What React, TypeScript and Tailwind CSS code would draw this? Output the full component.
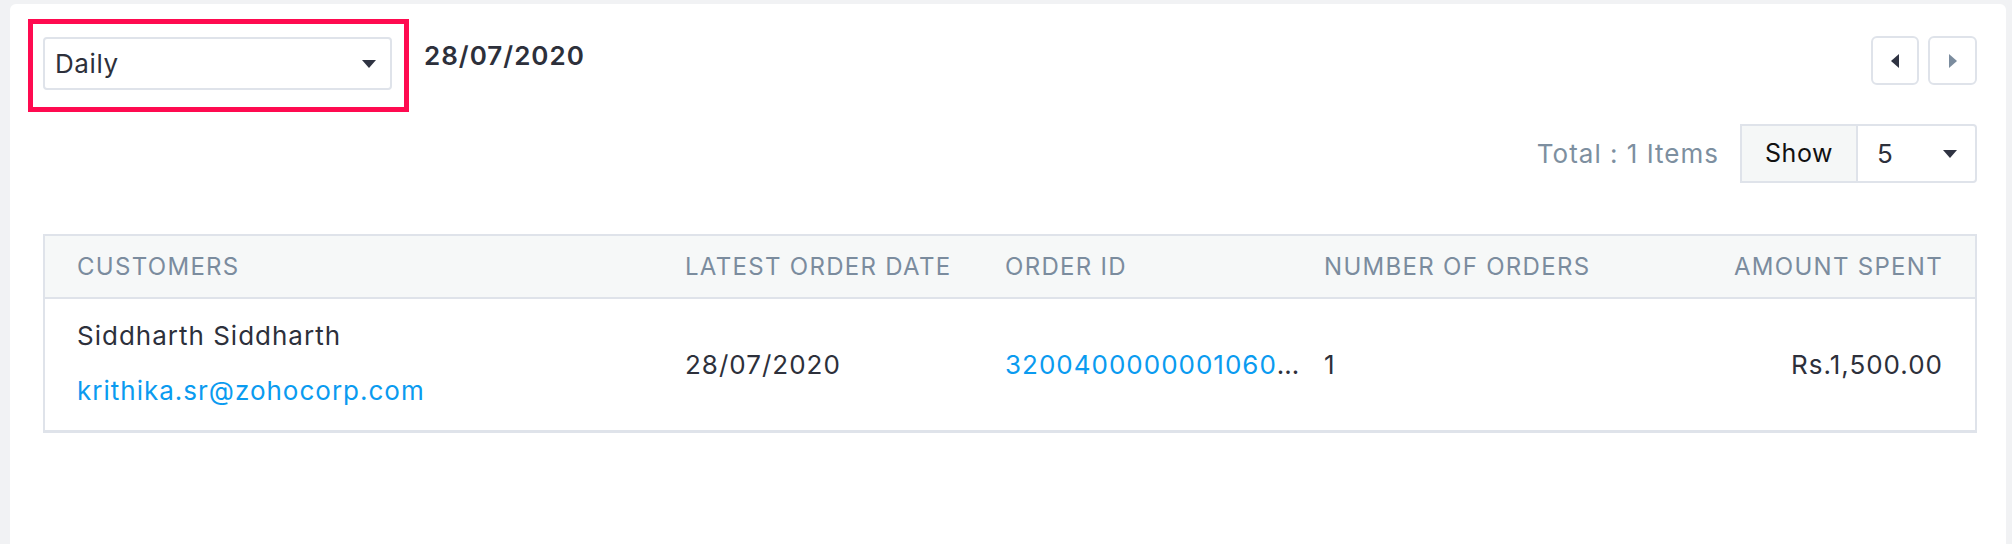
import React from 'react';

const font = { fontFamily: 'Inter, "Noto Sans", sans-serif' };

const Caret = ({ className = '' }: { className?: string }) => (
    <svg width="14" height="8" viewBox="0 0 14 8" className={className}>
        <path d="M0 0 L14 0 L7 8 Z" fill="#2f3342" />
    </svg>
);

const Arrow = ({ dir, color }: { dir: 'left' | 'right'; color: string }) => (
    <svg width="8" height="14" viewBox="0 0 8 14">
        {dir === 'left' ? <path d="M8 0 L8 14 L0 7 Z" fill={color} /> : <path d="M0 0 L0 14 L8 7 Z" fill={color} />}
    </svg>
);

const columns = ['CUSTOMERS', 'LATEST ORDER DATE', 'ORDER ID', 'NUMBER OF ORDERS', 'AMOUNT SPENT'];

const App = () => {
    return (
        <div className="w-[2012px] h-[544px] bg-[#f1f2f4] pt-[4px] pl-[10px] pr-[6px] overflow-hidden" style={font}>
            <div className="h-[560px] bg-white rounded-[6px] pl-[33px] pr-[29px] pt-[32px]">

                {/* Top bar */}
                <div className="flex items-start justify-between">
                    <div className="flex items-start mt-[1px]">
                        <div className="relative">
                            <div className="w-[349px] h-[53px] border-2 border-[#dfe3ea] rounded-[4px] flex items-center justify-between pl-[10px] pr-[14px]">
                                <span className="text-[26px] text-[#2d303b] tracking-[0.6px]">Daily</span>
                                <Caret />
                            </div>
                            {/* highlight annotation */}
                            <div className="absolute -left-[15px] -top-[18px] -right-[17px] -bottom-[22px] border-[5px] border-[#ff0a50]" />
                        </div>
                        <span className="ml-[32px] mt-[3px] text-[26px] leading-[32px] font-semibold text-[#2d303b] tracking-[1px]">28/07/2020</span>
                    </div>
                    <div className="flex gap-[9px]">
                        <button className="w-[48px] h-[49px] border-2 border-[#dfe3ea] rounded-[6px] flex items-center justify-center">
                            <Arrow dir="left" color="#2f3342" />
                        </button>
                        <button className="w-[49px] h-[49px] border-2 border-[#dfe3ea] rounded-[6px] flex items-center justify-center">
                            <Arrow dir="right" color="#7b8c9e" />
                        </button>
                    </div>
                </div>

                {/* Totals */}
                <div className="flex items-center justify-end mt-[34px]">
                    <span className="text-[26px] text-[#7d8fa0] mr-[21px] tracking-[1px]">Total : 1 Items</span>
                    <div className="flex h-[59px]">
                        <div className="w-[118px] bg-[#f5f7f7] border-2 border-[#dfe3ea] flex items-center justify-center text-[25px] tracking-[0.5px] text-[#111]">Show</div>
                        <div className="w-[119px] border-2 border-l-0 border-[#dfe3ea] rounded-r-[4px] flex items-center justify-between pl-[19px] pr-[18px]">
                            <span className="text-[26px] text-[#2d303b]">5</span>
                            <Caret />
                        </div>
                    </div>
                </div>

                {/* Table */}
                <div className="mt-[51px] border-2 border-b-[3px] border-[#dfe3ea] text-[26px] tracking-[1px]">
                    <div className="grid grid-cols-[608px_320px_319px_1fr_auto] items-center h-[63px] px-[32px] bg-[#f6f8f8] border-b-2 border-[#dfe3ea] text-[#7b8c9e] text-[24px] tracking-[1.3px]">
                        {columns.map((c, i) => (
                            <div key={c} className={i === 4 ? 'text-right' : ''}>{c}</div>
                        ))}
                    </div>
                    <div className="grid grid-cols-[608px_320px_319px_1fr_auto] items-center h-[131px] px-[32px] text-[#2d303b]">
                        <div className="flex flex-col gap-[23px] mt-[-2px]">
                            <span className="leading-[32px]">Siddharth Siddharth</span>
                            <span className="leading-[32px] text-[#0a9bf0]">krithika.sr@zohocorp.com</span>
                        </div>
                        <div>28/07/2020</div>
                        <div className="pr-[21px] truncate">
                            <span className="text-[#0a9bf0]">3200400000001060123</span>
                        </div>
                        <div>1</div>
                        <div className="text-right">Rs.1,500.00</div>
                    </div>
                </div>
            </div>
        </div>
    );
};

export default App;
